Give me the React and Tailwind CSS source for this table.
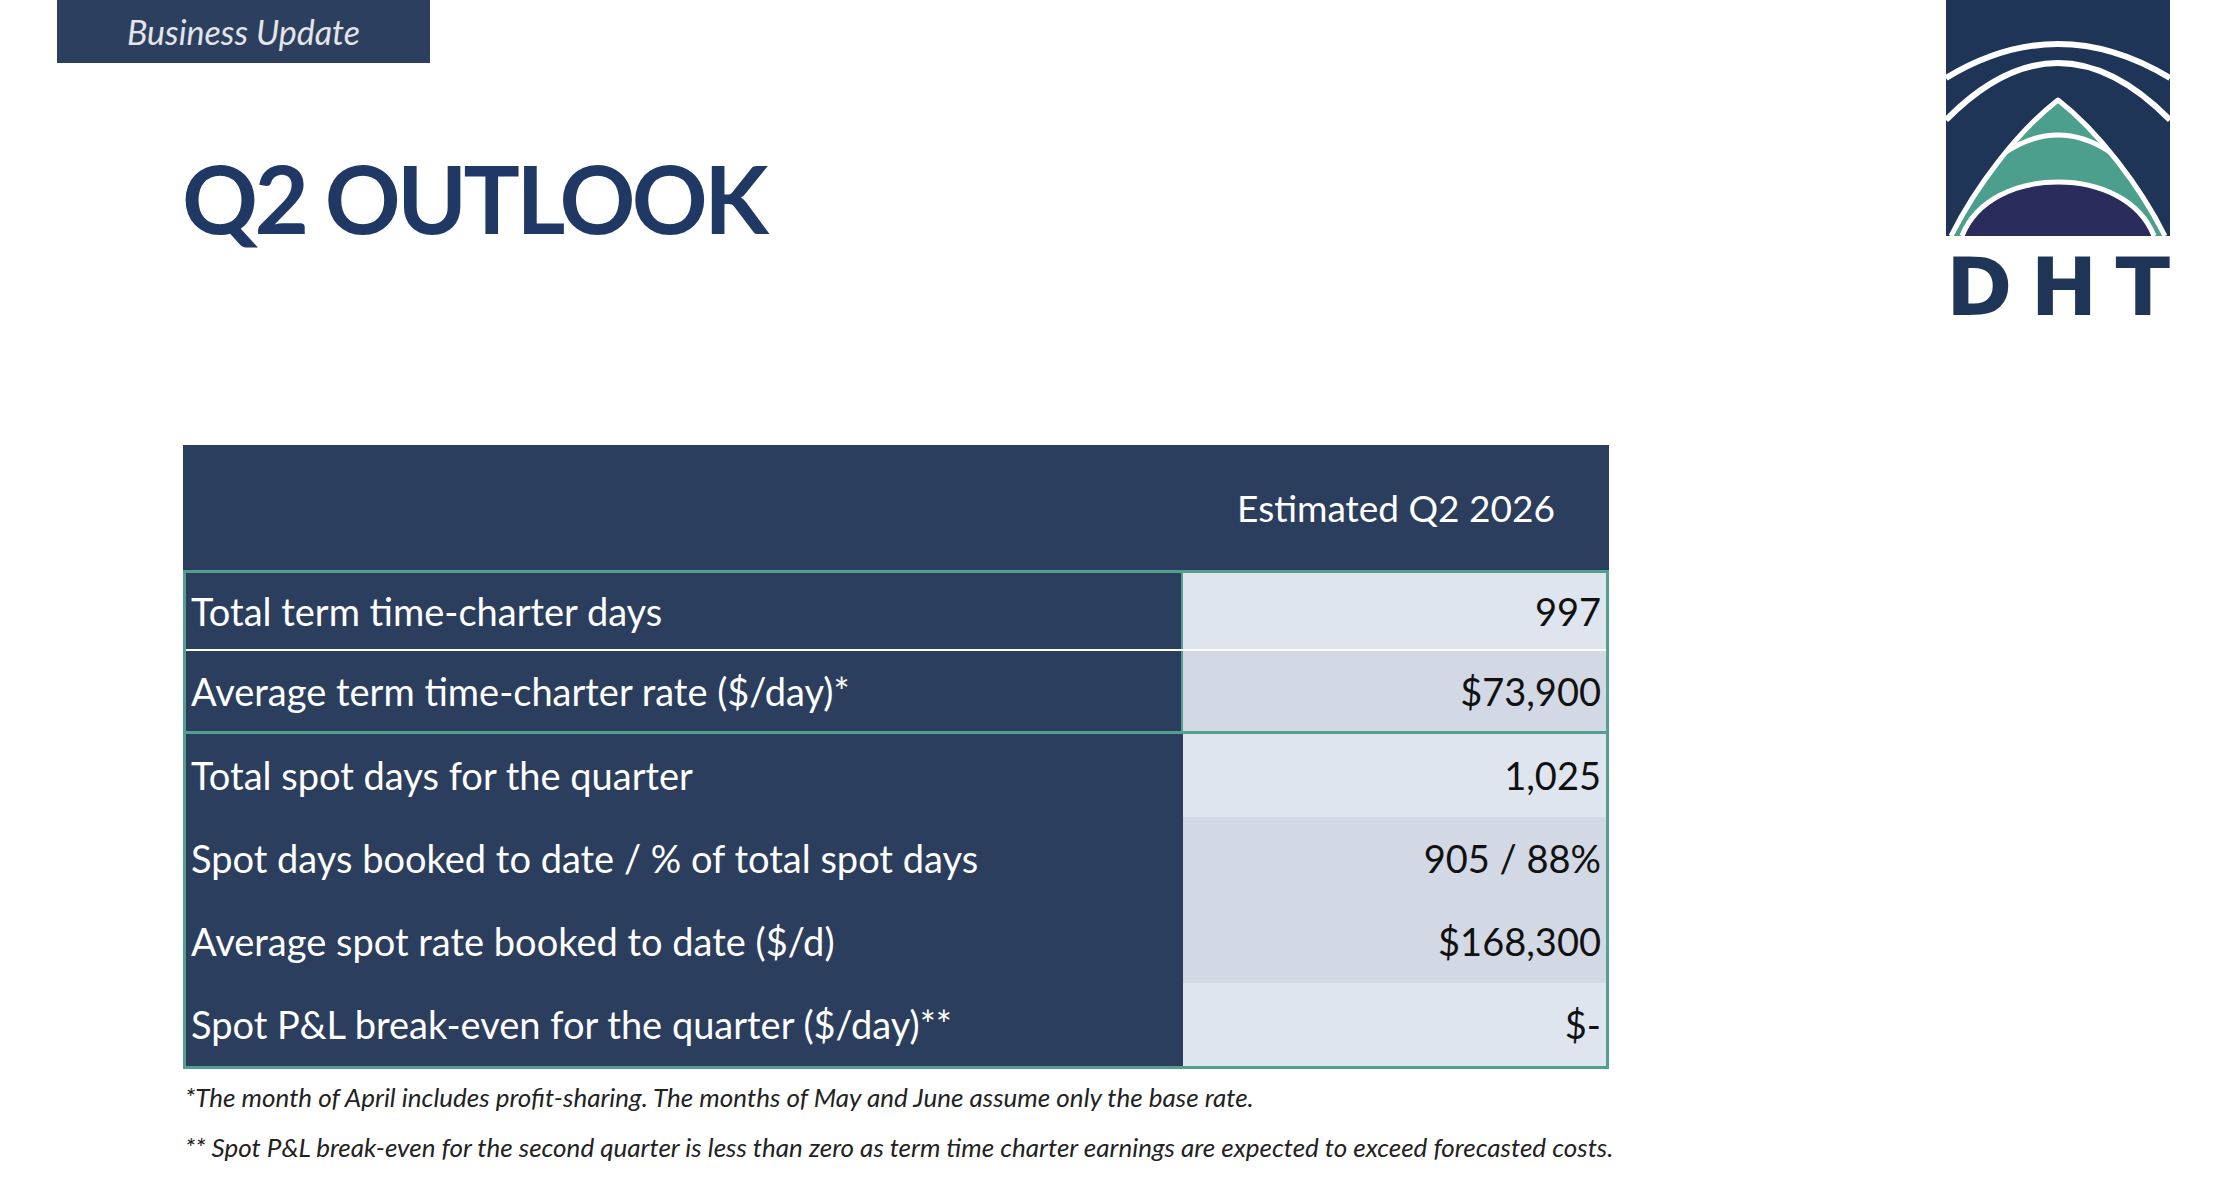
import React from "react";

// rows of the outlook table, grouped by section
const termRows = [
  { label: "Total term time-charter days", value: "997", bg: "bg-[#dfe5ee]", h: "h-[78px] border-b-[2px] border-white" },
  { label: "Average term time-charter rate ($/day)*", value: "$73,900", bg: "bg-[#d2d8e4]", h: "h-[80px]" },
];

const spotRows = [
  { label: "Total spot days for the quarter", value: "1,025", bg: "bg-[#dfe5ee]" },
  { label: "Spot days booked to date / % of total spot days", value: "905 / 88%", bg: "bg-[#d2d8e4]" },
  { label: "Average spot rate booked to date ($/d)", value: "$168,300", bg: "bg-[#d2d8e4]" },
  { label: "Spot P&L break-even for the quarter ($/day)**", value: "$-", bg: "bg-[#dfe5ee]" },
];

const Logo = () => (
  <div className="w-[224px]">
    <svg width="224" height="236" viewBox="0 0 224 236" className="block">
      <rect width="224" height="236" fill="#1f3558" />
      <path d="M0,78 Q112,10 224,78" fill="none" stroke="#fff" strokeWidth="6" />
      <path d="M0,120 Q112,6 224,120" fill="none" stroke="#fff" strokeWidth="6" />
      <path
        d="M5,236 C30,186 72,131 112,100 C152,131 194,186 219,236"
        fill="#4c9e8d"
        stroke="#fff"
        strokeWidth="5"
        strokeLinejoin="round"
      />
      <path d="M60,152 Q112,118 164,152" fill="none" stroke="#fff" strokeWidth="5" />
      <path
        d="M16,236 C30,200 70,182 112,182 C154,182 194,200 208,236"
        fill="#2a2c5b"
        stroke="#fff"
        strokeWidth="5"
      />
    </svg>
    {/* wordmark */}
    <div className="mt-[12px] flex justify-between text-[80px] leading-none font-bold text-[#1f3558] font-['DejaVu_Sans',sans-serif]">
      <span>D</span>
      <span>H</span>
      <span>T</span>
    </div>
  </div>
);

const Row = ({ label, value, bg, h, divider }) => (
  <div className={`flex ${h}`}>
    <div
      className={`w-[997px] bg-[#2c3e5d] flex items-center pl-[5px] text-white text-[38px] ${
        divider ? "border-r-[2px] border-[#559f8f]" : ""
      }`}
    >
      {label}
    </div>
    <div className={`flex-1 ${bg} flex items-center justify-end pr-[5px] text-[38px] text-[#111]`}>
      {value}
    </div>
  </div>
);

const App = () => {
  return (
    <div className="w-[2224px] h-[1204px] bg-white overflow-hidden flex justify-between font-['Lato',sans-serif]">
      <div>
        {/* section tag */}
        <div className="ml-[57px] w-[373px] h-[63px] bg-[#2d3f5e] flex items-center justify-center">
          <span className="italic text-[34px] text-[#e3e5ea]">Business Update</span>
        </div>

        <h1 className="ml-[182px] mt-[88px] text-[94px] leading-none font-bold tracking-[-3.5px] text-[#203864]">
          Q2 OUTLOOK
        </h1>

        {/* outlook table */}
        <div className="ml-[183px] mt-[200px] w-[1426px]">
          <div className="flex h-[125px] bg-[#2c3e5d]">
            <div className="w-[1000px]" />
            <div className="flex-1 flex items-center justify-center text-[37px] text-white">
              Estimated Q2 2026
            </div>
          </div>

          <div className="border-[3px] border-[#559f8f]">
            {termRows.map((r) => (
              <Row key={r.label} {...r} divider />
            ))}
          </div>

          <div className="border-x-[3px] border-b-[3px] border-[#559f8f]">
            {spotRows.map((r) => (
              <Row key={r.label} {...r} h="h-[83px]" />
            ))}
          </div>
        </div>

        {/* footnotes */}
        <div className="ml-[185px] mt-[13px] italic text-[26px] leading-[1.2] text-[#222]">
          <p>*The month of April includes profit-sharing. The months of May and June assume only the base rate.</p>
          <p className="mt-[19px]">
            ** Spot P&amp;L break-even for the second quarter is less than zero as term time charter earnings are expected to exceed forecasted costs.
          </p>
        </div>
      </div>

      <div className="mr-[54px]">
        <Logo />
      </div>
    </div>
  );
};

export default App;
